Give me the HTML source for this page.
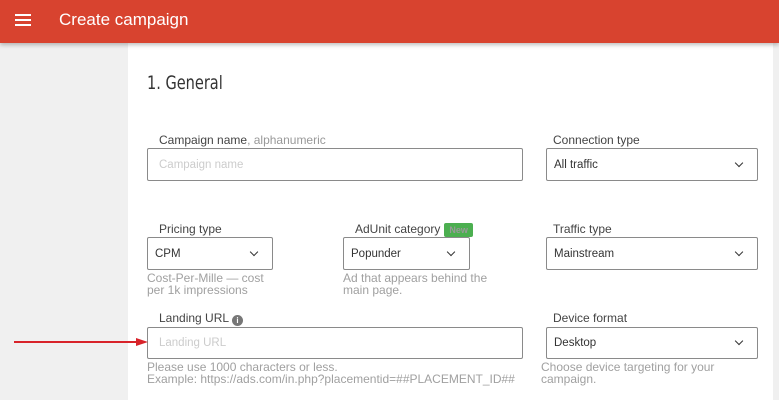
<!DOCTYPE html>
<html><head><meta charset="utf-8"><style>
*{box-sizing:border-box;margin:0;padding:0}
body{width:779px;height:400px;overflow:hidden;background:#f0f0f0;font-family:"Liberation Sans",sans-serif;position:relative}
.hdr{position:absolute;left:0;top:0;width:779px;height:43px;background:#d8432f;box-shadow:0 2px 4px rgba(0,0,0,.25);z-index:2}
.hdr .t{position:absolute;left:59px;top:10px;color:#fff;font-size:17px}
.hb{position:absolute;left:15px;width:16px;height:2px;background:#fff}
.card{position:absolute;left:128px;top:43px;width:645px;height:357px;background:#fff}
.abs{position:absolute}
.h1{left:147px;top:72px;font-size:19px;color:#333;font-family:"DejaVu Sans Condensed","Liberation Sans Narrow",sans-serif;font-weight:300;transform:scaleX(.85);transform-origin:left}
.lbl{font-size:12px;color:#444}
.lbl span{color:#999}
.box{border:1px solid #8a8a8a;border-radius:2px;background:#fff;font-size:11.5px;color:#333;padding-left:11px;display:flex;align-items:center}
.sel{padding-left:7px}
.ph{color:#ccc}
.chev{position:absolute;right:15px;top:50%;margin-top:-5px;width:6px;height:6px;border-right:1.8px solid #333;border-bottom:1.8px solid #333;transform:rotate(45deg)}
.help{font-size:12px;color:#a0a0a0;line-height:12px}
.new{background:#4caf50;color:#fff;font-size:9px;font-weight:bold;padding:2px 5px;border-radius:2px;margin-left:4px}
</style></head><body>
<div class="hdr"><div class="hb" style="top:14px"></div><div class="hb" style="top:19px"></div><div class="hb" style="top:24px"></div><div class="t">Create campaign</div></div>
<div class="card"></div>
<div class="abs h1">1. General</div>

<div class="abs lbl" style="left:159px;top:133px">Campaign name<span>, alphanumeric</span></div>
<div class="abs box" style="left:147px;top:148px;width:376px;height:33px"><span class="ph">Campaign name</span></div>
<div class="abs lbl" style="left:553px;top:133px">Connection type</div>
<div class="abs box sel" style="left:546px;top:148px;width:212px;height:33px">All traffic<div class="chev"></div></div>

<div class="abs lbl" style="left:159px;top:222px">Pricing type</div>
<div class="abs box sel" style="left:147px;top:237px;width:126px;height:33px">CPM<div class="chev"></div></div>
<div class="abs help" style="left:147px;top:272px">Cost-Per-Mille — cost<br>per 1k impressions</div>
<div class="abs lbl" style="left:355px;top:222px">AdUnit category<span class="new">New</span></div>
<div class="abs box sel" style="left:343px;top:237px;width:127px;height:33px">Popunder<div class="chev"></div></div>
<div class="abs help" style="left:343px;top:272px">Ad that appears behind the<br>main page.</div>
<div class="abs lbl" style="left:553px;top:222px">Traffic type</div>
<div class="abs box sel" style="left:546px;top:237px;width:212px;height:33px">Mainstream<div class="chev"></div></div>

<div class="abs lbl" style="left:159px;top:311px">Landing URL <span style="display:inline-block;width:11px;height:11px;border-radius:50%;background:#777;color:#fff;font-size:8px;text-align:center;line-height:11px;vertical-align:-1px;font-weight:bold">i</span></div>
<div class="abs box" style="left:147px;top:327px;width:376px;height:32px"><span class="ph">Landing URL</span></div>
<div class="abs help" style="left:147px;top:361px">Please use 1000 characters or less.<br>Example: https://ads.com/in.php?placementid=##PLACEMENT_ID##</div>
<div class="abs lbl" style="left:553px;top:311px">Device format</div>
<div class="abs box sel" style="left:546px;top:327px;width:212px;height:32px">Desktop<div class="chev"></div></div>
<div class="abs help" style="left:541px;top:361px">Choose device targeting for your<br>campaign.</div>

<svg class="abs" style="left:14px;top:337px" width="134" height="10"><line x1="0" y1="5" x2="124" y2="5" stroke="#d8232a" stroke-width="2"/><polygon points="122,1 134,5 122,9" fill="#d8232a"/></svg>
</body></html>
